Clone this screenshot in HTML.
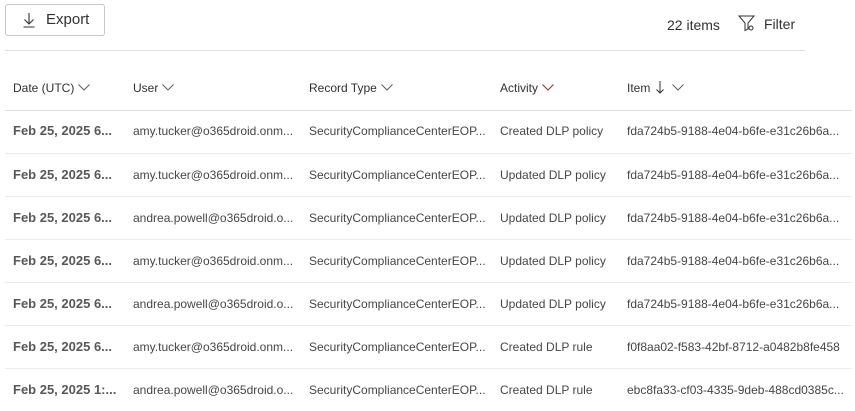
<!DOCTYPE html>
<html><head><style>
*{margin:0;padding:0;box-sizing:border-box}
body{width:855px;height:411px;overflow:hidden;background:#fff;font-family:"Liberation Sans",sans-serif;color:#323130;position:relative}
.abs{position:absolute;white-space:nowrap}
.btn{left:5px;top:4px;width:100px;height:32px;border:1px solid #c8c6c4;border-radius:3px}
.hdr{font-size:12px;color:#323130;top:81px}
.hdr svg{vertical-align:1px;margin-left:4px}
.row{position:absolute;left:5px;width:847px;height:43px;border-top:1px solid #edebe9}
.c{position:absolute;top:14px;font-size:12px;color:#484644;white-space:nowrap}
.d{font-weight:bold;font-size:13px;top:13px;color:#5a5856}
</style></head><body>
<div class="abs btn"></div>
<svg class="abs" style="left:22px;top:12px" width="14" height="16" viewBox="0 0 14 16"><path d="M7 1v11M2.5 7.5L7 12l4.5-4.5M1.5 15h11" stroke="#323130" stroke-width="1.1" fill="none"/></svg>
<div class="abs" style="left:46px;top:11px;font-size:15px">Export</div>
<div class="abs" style="left:667px;top:17px;font-size:14px">22 items</div>
<svg class="abs" style="left:738px;top:15px" width="18" height="17" viewBox="0 0 18 17"><path d="M1 1h15l-6 7v6l-3 1.5V8z" stroke="#323130" stroke-width="1" fill="none"/><circle cx="13" cy="13" r="2" stroke="#323130" stroke-width="1" fill="none"/></svg>
<div class="abs" style="left:764px;top:16px;font-size:14px">Filter</div>
<div class="abs" style="left:5px;top:50px;width:800px;height:1px;background:#e1dfdd"></div>
<div class="abs hdr" style="left:13px">Date (UTC)<svg width="12" height="7" viewBox="0 0 12 7"><path d="M.5.5L6 6 11.5.5" stroke="#605e5c" fill="none"/></svg></div>
<div class="abs hdr" style="left:133px">User<svg width="12" height="7" viewBox="0 0 12 7"><path d="M.5.5L6 6 11.5.5" stroke="#605e5c" fill="none"/></svg></div>
<div class="abs hdr" style="left:309px">Record Type<svg width="12" height="7" viewBox="0 0 12 7"><path d="M.5.5L6 6 11.5.5" stroke="#605e5c" fill="none"/></svg></div>
<div class="abs hdr" style="left:500px">Activity<svg width="12" height="7" viewBox="0 0 12 7"><path d="M.5.5L6 6 11.5.5" stroke="#a4262c" fill="none"/></svg></div>
<div class="abs hdr" style="left:627px">Item<svg width="8" height="13" viewBox="0 0 8 13" style="margin-left:6px;vertical-align:-2px"><path d="M4 0v12M.5 8.5L4 12l3.5-3.5" stroke="#323130" fill="none"/></svg><svg width="12" height="7" viewBox="0 0 12 7" style="margin-left:8px"><path d="M.5.5L6 6 11.5.5" stroke="#605e5c" fill="none"/></svg></div>
<div class="abs" style="left:5px;top:110px;width:847px;height:1px;background:#e1dfdd"></div>

<div class="row" style="top:110px;border-top:none"><div class="c d" style="left:8px">Feb 25, 2025 6...</div><div class="c" style="left:128px">amy.tucker@o365droid.onm...</div><div class="c" style="left:304px">SecurityComplianceCenterEOP...</div><div class="c" style="left:495px">Created DLP policy</div><div class="c" style="left:622px">fda724b5-9188-4e04-b6fe-e31c26b6a...</div></div>
<div class="row" style="top:153px"><div class="c d" style="left:8px">Feb 25, 2025 6...</div><div class="c" style="left:128px">amy.tucker@o365droid.onm...</div><div class="c" style="left:304px">SecurityComplianceCenterEOP...</div><div class="c" style="left:495px">Updated DLP policy</div><div class="c" style="left:622px">fda724b5-9188-4e04-b6fe-e31c26b6a...</div></div>
<div class="row" style="top:196px"><div class="c d" style="left:8px">Feb 25, 2025 6...</div><div class="c" style="left:128px">andrea.powell@o365droid.o...</div><div class="c" style="left:304px">SecurityComplianceCenterEOP...</div><div class="c" style="left:495px">Updated DLP policy</div><div class="c" style="left:622px">fda724b5-9188-4e04-b6fe-e31c26b6a...</div></div>
<div class="row" style="top:239px"><div class="c d" style="left:8px">Feb 25, 2025 6...</div><div class="c" style="left:128px">amy.tucker@o365droid.onm...</div><div class="c" style="left:304px">SecurityComplianceCenterEOP...</div><div class="c" style="left:495px">Updated DLP policy</div><div class="c" style="left:622px">fda724b5-9188-4e04-b6fe-e31c26b6a...</div></div>
<div class="row" style="top:282px"><div class="c d" style="left:8px">Feb 25, 2025 6...</div><div class="c" style="left:128px">andrea.powell@o365droid.o...</div><div class="c" style="left:304px">SecurityComplianceCenterEOP...</div><div class="c" style="left:495px">Updated DLP policy</div><div class="c" style="left:622px">fda724b5-9188-4e04-b6fe-e31c26b6a...</div></div>
<div class="row" style="top:325px"><div class="c d" style="left:8px">Feb 25, 2025 6...</div><div class="c" style="left:128px">amy.tucker@o365droid.onm...</div><div class="c" style="left:304px">SecurityComplianceCenterEOP...</div><div class="c" style="left:495px">Created DLP rule</div><div class="c" style="left:622px">f0f8aa02-f583-42bf-8712-a0482b8fe458</div></div>
<div class="row" style="top:368px"><div class="c d" style="left:8px">Feb 25, 2025 1:...</div><div class="c" style="left:128px">andrea.powell@o365droid.o...</div><div class="c" style="left:304px">SecurityComplianceCenterEOP...</div><div class="c" style="left:495px">Created DLP rule</div><div class="c" style="left:622px">ebc8fa33-cf03-4335-9deb-488cd0385c...</div></div>
</body></html>
